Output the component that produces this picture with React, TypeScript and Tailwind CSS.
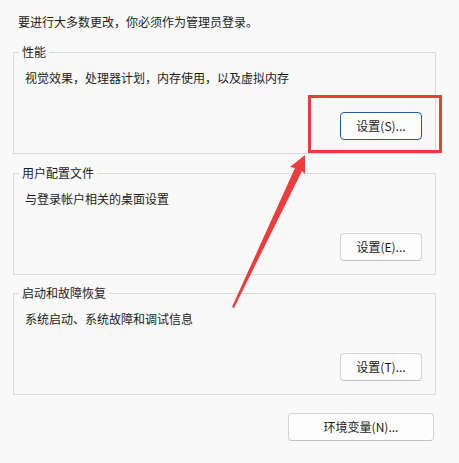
import React from 'react'

const font = { fontFamily: '"Noto Sans CJK SC", "Noto Sans", sans-serif' }

function WinButton({ label, focused, className }: { label: string; focused?: boolean; className?: string }) {
  return (
    <button
      type="button"
      className={
        'h-[28px] rounded-[4px] border bg-[#fdfdfd] text-[12px] leading-[16px] text-[#1b1b1b] ' +
        (focused ? 'border-[#1f5f9e] ' : 'border-[#d3d3d3] border-b-[#c2c2c2] ') +
        (className ?? '')
      }
    >
      {label}
    </button>
  )
}

function Group({ title, desc, button, focused, className }: { title: string; desc: string; button: string; focused?: boolean; className?: string }) {
  return (
    <fieldset className={'border border-[#dadada] pl-[11px] pr-[13px] pb-[13px] ' + (className ?? '')}>
      <legend className="-ml-[6px] px-[3px] text-[12px] leading-[16px] text-[#1b1b1b]">{title}</legend>
      <p className="mt-[10px] text-[12px] leading-[16px] text-[#1b1b1b]">{desc}</p>
      <div className="mt-[26px] flex justify-end">
        <WinButton label={button} focused={focused} className="w-[82px]" />
      </div>
    </fieldset>
  )
}

export default function App() {
  return (
    <div className="relative h-[463px] w-[459px] overflow-hidden bg-[#f9f9f9]" style={font}>
      <div className="flex w-[436px] flex-col pl-[13px] pt-[14px]">
        <p className="ml-[5px] text-[12px] leading-[16px] text-[#1b1b1b]">要进行大多数更改，你必须作为管理员登录。</p>
        <Group className="mt-[14px]" title="性能" desc="视觉效果，处理器计划，内存使用，以及虚拟内存" button="设置(S)..." focused />
        <Group className="mt-[11px]" title="用户配置文件" desc="与登录帐户相关的桌面设置" button="设置(E)..." />
        <Group className="mt-[10px]" title="启动和故障恢复" desc="系统启动、系统故障和调试信息" button="设置(T)..." />
        <div className="mt-[18px] flex justify-end pr-[2px]">
          <WinButton label="环境变量(N)..." className="w-[146px]" />
        </div>
      </div>

      {/* annotation: red highlight box */}
      <div className="pointer-events-none absolute left-[308px] top-[95px] h-[58px] w-[134px] border-[3px] border-[#ec3b3f]" />

      {/* annotation: arrow */}
      <svg className="pointer-events-none absolute left-0 top-0" width="459" height="463" viewBox="0 0 459 463">
        <polygon
          points="305,155 305,174 302,171 234,308 232,307 295,168 290,167"
          fill="#ee3b3d"
        />
      </svg>
    </div>
  )
}
